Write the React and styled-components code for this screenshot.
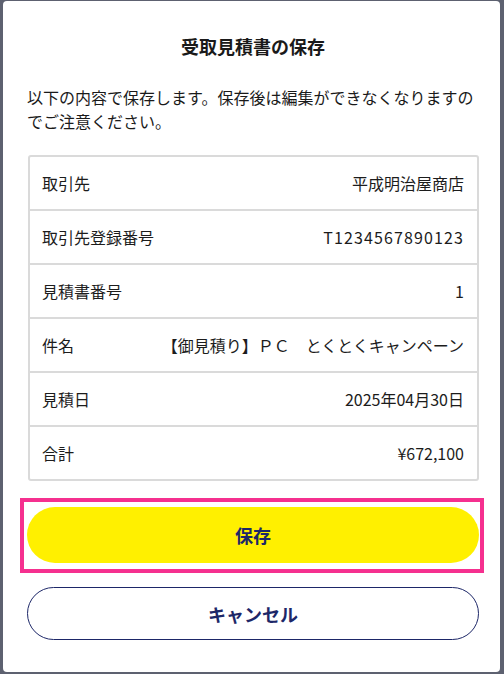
import React from "react";
import styled, { createGlobalStyle } from "styled-components";

const Global = createGlobalStyle`
  html, body { margin: 0; padding: 0; }
  body {
    background: #5d6170;
    font-family: "Noto Sans CJK JP", "Noto Sans", sans-serif;
    color: #1c1c1c;
  }
`;

const Overlay = styled.div`
  width: 504px;
  height: 674px;
  box-sizing: border-box;
  padding: 1px 4px 2px 3px;
  display: flex;
`;

const Dialog = styled.section`
  flex: 1;
  background: #ffffff;
  border-radius: 4px;
  box-sizing: border-box;
  padding: 32px 21px 32px 24px;
  display: flex;
  flex-direction: column;
`;

const Title = styled.h2`
  margin: 0;
  font-size: 18px;
  line-height: 27px;
  font-weight: 700;
  text-align: center;
  color: #1a1a1a;
`;

const Lead = styled.p`
  margin: 25px 0 0;
  font-size: 16px;
  line-height: 24px;
  color: #1a1a1a;
`;

const Table = styled.dl`
  margin: 22px 0 0 1px;
  border: 2px solid #dadada;
  border-radius: 3px;
`;

const Row = styled.div`
  height: 52px;
  display: flex;
  align-items: center;
  justify-content: space-between;
  padding: 0 13px 0 12px;
  & + & { border-top: 2px solid #dadada; }
`;

const Label = styled.dt`
  font-size: 16px;
  color: #1c1c1c;
`;

const Value = styled.dd`
  margin: 0;
  font-size: 16px;
  color: #1c1c1c;
  text-align: right;
  letter-spacing: ${(p) => (p.$wide ? "0.07em" : "normal")};
`;

/* keyboard focus frame around the active button */
const FocusFrame = styled.div`
  margin: 17px -5px 0 -7px;
  padding: 5px 1px 6px 3px;
  border: 4px solid #f5308f;
  display: flex;
  flex-direction: column;
`;

const Button = styled.button`
  height: ${(p) => (p.$primary ? 56 : 55)}px;
  border-radius: 28px;
  font-family: inherit;
  font-size: 18px;
  font-weight: 700;
  color: #1d2768;
  background: ${(p) => (p.$primary ? "#fff000" : "#ffffff")};
  border: ${(p) => (p.$primary ? "none" : "1px solid #1d2768")};
  outline: none;
  cursor: pointer;
  margin-top: ${(p) => p.$gap || 0}px;
`;

const rows = [
  ["取引先", "平成明治屋商店"],
  ["取引先登録番号", "T1234567890123", true],
  ["見積書番号", "1"],
  ["件名", "【御見積り】ＰＣ　とくとくキャンペーン"],
  ["見積日", "2025年04月30日"],
  ["合計", "¥672,100"],
];

export default function App() {
  return (
    <>
      <Global />
      <Overlay>
        <Dialog>
          <Title>受取見積書の保存</Title>
          <Lead>以下の内容で保存します。保存後は編集ができなくなりますのでご注意ください。</Lead>
          <Table>
            {rows.map(([k, v, wide]) => (
              <Row key={k}>
                <Label>{k}</Label>
                <Value $wide={wide}>{v}</Value>
              </Row>
            ))}
          </Table>
          <FocusFrame>
            <Button $primary>保存</Button>
          </FocusFrame>
          <Button $gap={14}>キャンセル</Button>
        </Dialog>
      </Overlay>
    </>
  );
}
